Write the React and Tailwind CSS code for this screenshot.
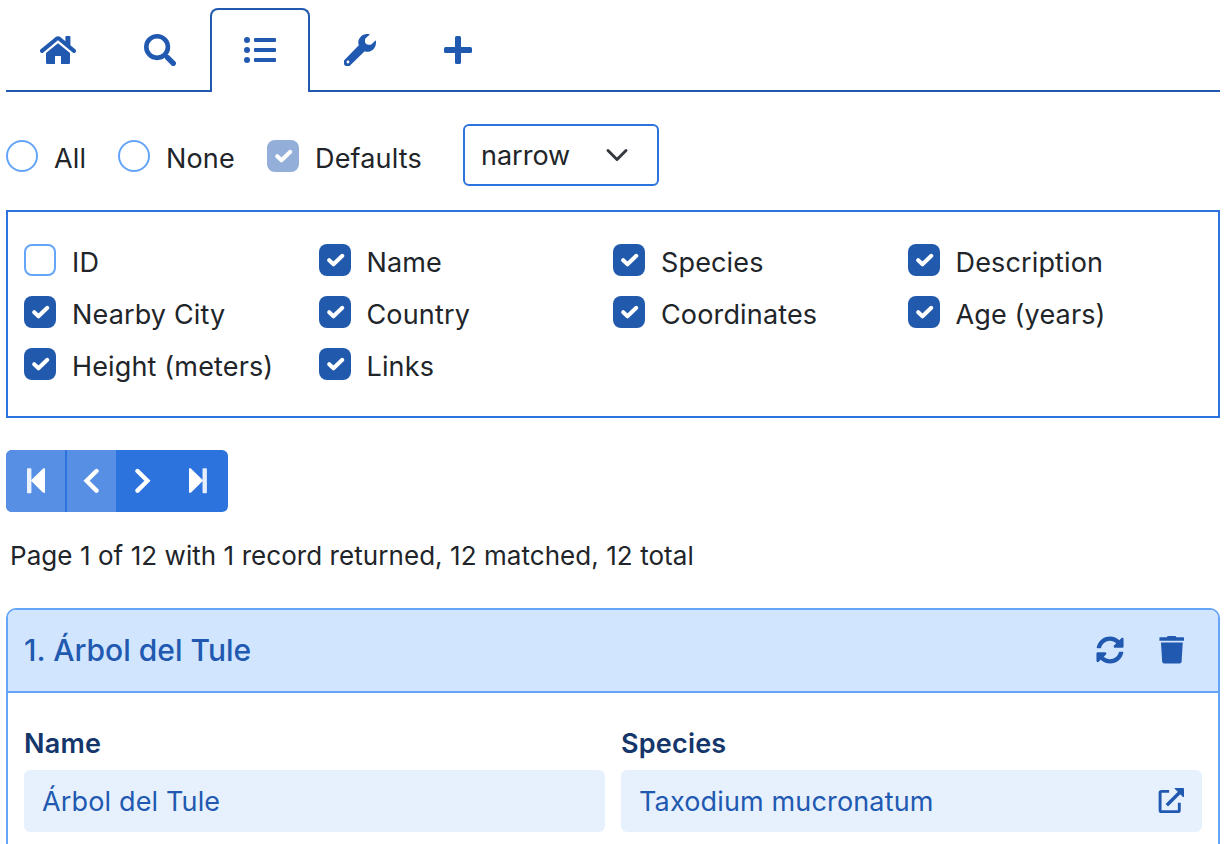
import React from "react";
import { FaSyncAlt } from "react-icons/fa";

const HomeIcon = () => (
  <svg width="36" height="32" viewBox="40 34 36 32" fill="currentColor">
    <path d="M42 50.9 L56.7 38.7 Q58 37.7 59.3 38.7 L74 50.9" fill="none" stroke="currentColor" strokeWidth="4" strokeLinecap="round" />
    <path d="M65.4 36.8q0-.8.8-.8h3.4q.8 0 .8.8V48.5l-5-4.2z" />
    <path d="M58 43.2 L70 53.1 V62.8 Q70 64 68.8 64 H61 V56.6 Q61 56 60.4 56 H55.6 Q55 56 55 56.6 V64 H47.2 Q46 64 46 62.8 V53.1 Z" />
  </svg>
);
const SearchIcon = () => (
  <svg width="32" height="32" viewBox="144 34 32 32" fill="none" stroke="currentColor">
    <circle cx="157.1" cy="47.1" r="10.8" strokeWidth="4.6" />
    <path d="M164 54l3 3" strokeWidth="3" />
    <path d="M167.6 57.6L173.3 63.3" strokeWidth="5.4" strokeLinecap="round" />
  </svg>
);
const ListIcon = () => (
  <svg width="32" height="32" viewBox="244 34 32 32" fill="currentColor">
    {[40, 50, 60].map((y) => (
      <g key={y}>
        <circle cx="247" cy={y} r="3" />
        <rect x="254" y={y - 2} width="22" height="4" rx="1" />
      </g>
    ))}
  </svg>
);
const WrenchIcon = () => (
  <svg width="32" height="32" viewBox="344 34 32 32" fill="currentColor">
    <path fillRule="evenodd" d="M369.8 34.4 C364 32.6 358.3 37 358.3 42.6 C358.3 43.6 358.5 44.5 358.8 45.3 L345.2 59.2 A4 4 0 1 0 350.8 64.8 L364.7 51.2 C370.3 53.2 376 49 376 42.4 C376 41.7 375.9 40.9 375.7 40.3 L371.3 44.6 C369.5 45.2 367 44.7 366 43.8 C365 42.7 364.6 40.4 365.4 38.6 Z M348 60.6a1.4 1.4 0 1 1 0 2.8a1.4 1.4 0 0 1 0-2.8z" />
  </svg>
);
const PlusIcon = () => (
  <svg width="28" height="32" viewBox="444 34 28 32" fill="currentColor">
    <rect x="455" y="36" width="6" height="28" rx="1.6" />
    <rect x="444" y="47" width="28" height="6" rx="1.6" />
  </svg>
);
const TrashIcon = () => (
  <svg width="26" height="28" viewBox="1159 636 26 28" fill="currentColor">
    <path d="M1160.200 637.200h6.600l1.200-1.600h7.200l1.200 1.600h6.800q.8 0 .8.8v2.800h-24.600v-2.800q0-.8.8-.8z" />
    <path d="M1161 642.400h21.800l-1.200 19.400q-.2 1.800-2 1.800h-15.400q-1.800 0-2-1.800z" />
  </svg>
);
const ExternalIcon = () => (
  <svg width="26" height="26" viewBox="1158.400 787 26 26" fill="none" stroke="currentColor" strokeWidth="2.900">
    <path d="M1169.500 790.400h-7.600q-1.400 0-1.400 1.400v17.400q0 1.400 1.400 1.400h16.400q1.400 0 1.400-1.400v-7.400" />
    <path d="M1167.200 804.200L1180.500 791" strokeWidth="3.400" />
    <path d="M1175.400 787.500h8.500v8.500z" fill="currentColor" stroke="currentColor" strokeWidth="1" strokeLinejoin="round" />
  </svg>
);

const tabs = [
  { name: "home", Icon: HomeIcon },
  { name: "search", Icon: SearchIcon },
  { name: "list", Icon: ListIcon, active: true },
  { name: "tools", Icon: WrenchIcon },
  { name: "add", Icon: PlusIcon },
];

function Check({ checked, muted }) {
  if (!checked) return <span className="h-8 w-8 shrink-0 rounded-lg border-2 border-[#65a5f8]" />;
  return (
    <span className={`flex h-8 w-8 shrink-0 items-center justify-center rounded-lg ${muted ? "bg-[#93aed8]" : "bg-[#2159ac]"}`}>
      <svg width="32" height="32" viewBox="0 0 32 32" fill="none" stroke="white" strokeWidth="4" strokeLinecap="round" strokeLinejoin="round">
        <path d="M10.200 16.200l4.300 4.100 8.800-8.500" />
      </svg>
    </span>
  );
}

const columns = [
  ["ID", false], ["Name", true], ["Species", true], ["Description", true],
  ["Nearby City", true], ["Country", true], ["Coordinates", true], ["Age (years)", true],
  ["Height (meters)", true], ["Links", true],
];

const Label = ({ children }) => <span className="mt-[3px] whitespace-nowrap leading-8">{children}</span>;

function Field({ label, value, link }) {
  return (
    <div className="flex-1">
      <div className="h-[42px] font-semibold tracking-[0.2px] text-[#14366b]">{label}</div>
      <div className="flex h-[62px] items-center justify-between rounded-md bg-[#e7f1fe] px-[18px] text-[#2159b0]">
        <span className="pt-0.5">{value}</span>
        {link && <ExternalIcon />}
      </div>
    </div>
  );
}

export default function App() {
  return (
    <div className="h-[844px] w-[1228px] overflow-hidden bg-white pl-[6px] pr-2 pt-2 font-['Inter',sans-serif] text-[27px] leading-8 tracking-[0.15px] text-[#212529]">
      <nav className="flex h-[84px] text-[#2159b0]">
        {tabs.map(({ name, Icon, active }) => (
          <div
            key={name}
            className={
              active
                ? "flex rounded-t-lg border-2 border-b-0 border-[#2159b0] px-8 pt-6"
                : "flex border-b-2 border-[#2159b0] px-[34px] pt-[26px]"
            }
          >
            <Icon />
          </div>
        ))}
        <div className="flex-1 border-b-2 border-[#2159b0]" />
      </nav>

      <div className="mt-8 flex h-[62px]">
        <div className="flex w-28 gap-4 pt-4">
          <span className="h-8 w-8 rounded-full border-2 border-[#65a5f8]" />
          <Label>All</Label>
        </div>
        <div className="flex w-[149px] gap-4 pt-4">
          <span className="h-8 w-8 rounded-full border-2 border-[#65a5f8]" />
          <Label>None</Label>
        </div>
        <div className="flex w-[196px] gap-4 pt-4">
          <Check checked muted />
          <Label>Defaults</Label>
        </div>
        <div className="flex h-[62px] w-[196px] items-center justify-between rounded-md border-2 border-[#2d73de] pl-4 pr-[28px]">
          <span className="pt-0.5 tracking-normal">narrow</span>
          <svg width="24" height="16" viewBox="0 0 24 16" fill="none" stroke="#343a40" strokeWidth="3" strokeLinecap="round" strokeLinejoin="round">
            <path d="M3 3.500l9 9 9-9" />
          </svg>
        </div>
      </div>

      <div className="mt-6 grid h-[208px] grid-cols-4 content-start gap-y-5 border-2 border-[#2d73de] px-4 pt-8">
        {columns.map(([name, checked]) => (
          <div key={name} className="flex h-8 gap-4">
            <Check checked={checked} />
            <Label>{name}</Label>
          </div>
        ))}
      </div>

      <div className="mt-8 flex h-[62px] w-[222px] overflow-hidden rounded-md bg-[#2d73de] text-white">
        <div className="flex w-[59px] items-center justify-center bg-[#578fe5]">
          <svg width="20" height="26" viewBox="26 468 20 26">
            <rect x="27" y="468.200" width="4.400" height="25" rx=".8" fill="#edf3fc" />
            <path d="M30.800 480.600L42.600 468.900q2.400-1.900 2.400.7v22q0 2.600-2.400.7z" fill="white" />
          </svg>
        </div>
        <div className="ml-0.5 flex w-[49px] items-center justify-center bg-[#578fe5]">
          <svg width="20" height="26" viewBox="82 468 20 26" fill="none" stroke="white" strokeWidth="4.400" strokeLinecap="round">
            <path d="M96.500 471L86.600 480.800L96.500 490.600" />
          </svg>
        </div>
        <div className="flex w-[52px] items-center justify-center">
          <svg width="20" height="26" viewBox="132 468 20 26" fill="none" stroke="white" strokeWidth="4.400" strokeLinecap="round">
            <path d="M137.500 471L147.400 480.800L137.500 490.600" />
          </svg>
        </div>
        <div className="flex w-[60px] items-center justify-center">
          <svg width="20" height="26" viewBox="188 468 20 26">
            <rect x="202.500" y="468.200" width="4.400" height="25" rx=".8" fill="#e6eefb" />
            <path d="M203.200 480.600L191.400 468.900q-2.400-1.900-2.400.7v22q0 2.600 2.400.7z" fill="white" />
          </svg>
        </div>
      </div>

      <p className="mt-7 pl-1 text-[26px] leading-8 tracking-[0.060px]">Page 1 of 12 with 1 record returned, 12 matched, 12 total</p>

      <section className="mt-9 h-[300px] rounded-t-[10px] border-2 border-[#65a5f8]">
        <header className="flex h-[83px] items-center justify-between rounded-t-lg border-b-2 border-[#65a5f8] bg-[#d1e5fe] pb-0.5 pl-4 pr-[33px] text-[#2159b0]">
          <h2 className="text-[30px] font-medium leading-9 tracking-normal">1. Árbol del Tule</h2>
          <div className="flex items-center gap-[35px]">
            <FaSyncAlt size={28} />
            <TrashIcon />
          </div>
        </header>
        <div className="flex gap-4 px-4 pt-[35px]">
          <Field label="Name" value="Árbol del Tule" />
          <Field label="Species" value="Taxodium mucronatum" link />
        </div>
      </section>
    </div>
  );
}
